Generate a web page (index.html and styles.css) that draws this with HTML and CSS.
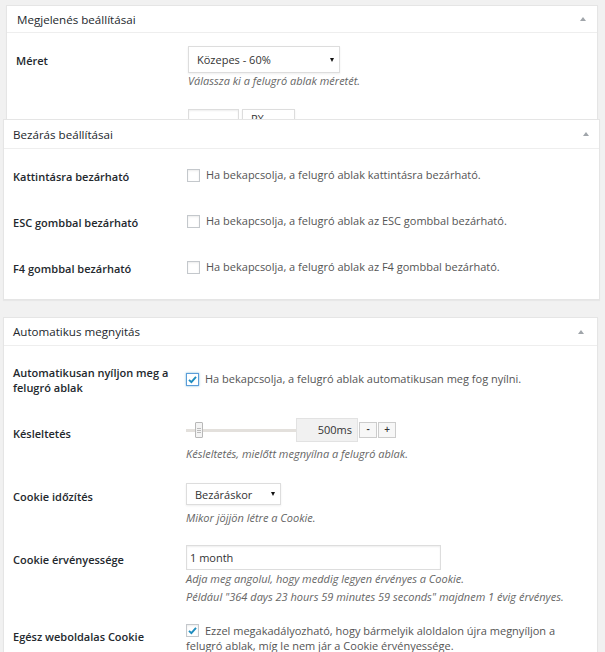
FILE: index.html
```html
<!DOCTYPE html>
<html lang="hu">
<head>
<meta charset="utf-8">
<title>Beállítások</title>
<link rel="stylesheet" href="styles.css">
</head>
<body>
<div class="page">
  <section class="card card-1">
    <header class="card-head head-1"><h2>Megjelenés beállításai</h2><span class="toggle"></span></header>
    <div class="card-body body-1">
      <div class="row r1-a">
        <div class="label lo7">Méret</div>
        <div class="field">
          <div class="select sel-meret"><span>Közepes - 60%</span><i class="arrow"></i></div>
          <p class="desc d1">Válassza ki a felugró ablak méretét.</p>
        </div>
      </div>
      <div class="row r1-b">
        <div class="label lo7">Egyedi szélesség</div>
        <div class="field inline">
          <div class="input in-small"></div>
          <div class="select sel-px"><span>PX</span><i class="arrow"></i></div>
        </div>
      </div>
    </div>
  </section>

  <section class="card card-2">
    <header class="card-head head-2"><h2>Bezárás beállításai</h2><span class="toggle"></span></header>
    <div class="card-body body-2">
      <div class="row">
        <div class="label lo2">Kattintásra bezárható</div>
        <div class="field"><p class="check-line"><span class="cb"></span>Ha bekapcsolja, a felugró ablak kattintásra bezárható.</p></div>
      </div>
      <div class="row">
        <div class="label lo2">ESC gombbal bezárható</div>
        <div class="field"><p class="check-line"><span class="cb"></span>Ha bekapcsolja, a felugró ablak az ESC gombbal bezárható.</p></div>
      </div>
      <div class="row">
        <div class="label lo2">F4 gombbal bezárható</div>
        <div class="field"><p class="check-line"><span class="cb"></span>Ha bekapcsolja, a felugró ablak az F4 gombbal bezárható.</p></div>
      </div>
    </div>
  </section>

  <section class="card card-3">
    <header class="card-head head-3"><h2>Automatikus megnyitás</h2><span class="toggle"></span></header>
    <div class="card-body body-3">
      <div class="row r3-a">
        <div class="label two-line">Automatikusan nyíljon meg a felugró ablak</div>
        <div class="field fo6"><p class="check-line"><span class="cb checked focus"><svg viewBox="0 0 13 13" width="13" height="13"><path d="M3 6.8 L5.4 9.2 L10 3.8" fill="none" stroke="#1e8cbe" stroke-width="1.9"/></svg></span>Ha bekapcsolja, a felugró ablak automatikusan meg fog nyílni.</p></div>
      </div>
      <div class="row r3-b">
        <div class="label lo8">Késleltetés</div>
        <div class="field">
          <div class="slider-line">
            <div class="slider"><span class="track"></span><span class="handle"><i></i><i></i><i></i></span></div>
            <div class="value">500ms</div>
            <div class="steps"><span class="step">-</span><span class="step">+</span></div>
          </div>
          <p class="desc d3">Késleltetés, mielőtt megnyílna a felugró ablak.</p>
        </div>
      </div>
      <div class="row r3-c">
        <div class="label lo6">Cookie időzítés</div>
        <div class="field">
          <div class="select sel-bez"><span>Bezáráskor</span><i class="arrow"></i></div>
          <p class="desc d4">Mikor jöjjön létre a Cookie.</p>
        </div>
      </div>
      <div class="row r3-d">
        <div class="label lo7">Cookie érvényessége</div>
        <div class="field">
          <div class="input in-wide">1 month</div>
          <p class="desc d1">Adja meg angolul, hogy meddig legyen érvényes a Cookie.<br>Például "364 days 23 hours 59 minutes 59 seconds" majdnem 1 évig érvényes.</p>
        </div>
      </div>
      <div class="row r3-e">
        <div class="label lo6">Egész weboldalas Cookie</div>
        <div class="field"><p class="check-line wrap"><span class="cb checked"><svg viewBox="0 0 13 13" width="13" height="13"><path d="M3 6.8 L5.4 9.2 L10 3.8" fill="none" stroke="#1e8cbe" stroke-width="1.9"/></svg></span>Ezzel megakadályozható, hogy bármelyik aloldalon újra megnyíljon a felugró ablak, míg le nem jár a Cookie érvényessége.</p></div>
      </div>
    </div>
  </section>
</div>
</body>
</html>
```

FILE: styles.css
```css
* { box-sizing: border-box; }
html, body { margin: 0; padding: 0; }
body {
  background: #f1f1f1;
  font-family: "Open Sans", "Noto Sans", sans-serif;
  font-size: 11px;
  color: #444;
  height: 652px;
  overflow: hidden;
}
.page { padding-top: 5px; }
p { margin: 0; }

.card {
  background: #fff;
  border: 1px solid #e5e5e5;
  box-shadow: 0 1px 1px rgba(0,0,0,0.04);
}
.card-1 { margin: 0 7px 0 6px; height: 114px; overflow: hidden; border-bottom: 0; }
.card-2 { margin: 0 5px 0 3px; position: relative; }
.card-3 { margin: 17px 7px 0 3px; }

.card-head {
  display: flex;
  align-items: center;
  justify-content: space-between;
  border-bottom: 1px solid #eee;
  padding: 0 11px 0 10px;
}
.head-1 { height: 27px; }
.head-2 { height: 29px; padding-left: 9px; padding-right: 10px; }
.head-3 { height: 28px; padding-left: 9px; padding-right: 13px; }
.card-head h2 {
  margin: 0;
  font-size: 11.6px;
  font-weight: 400;
  color: #23282d;
}
.toggle {
  width: 0; height: 0;
  border-left: 3.5px solid transparent;
  border-right: 3.5px solid transparent;
  border-bottom: 4px solid #a0a5aa;
}

.card-body { padding: 0 10px 0 9px; }
.row {
  display: grid;
  grid-template-columns: 173px 1fr;
  align-items: start;
}
.body-1 .row { grid-template-columns: 172px 1fr; }
.label {
  font-weight: 600;
  color: #23282d;
  line-height: 16px;
}
.label.two-line { line-height: 15px; padding-right: 6px; }
.lo2 { margin-top: 2px; }
.lo6 { margin-top: 6px; }
.lo7 { margin-top: 7px; }
.lo8 { margin-top: 8px; }
.fo6 { margin-top: 6px; }

/* card 1 */
.body-1 { padding-top: 13px; }
.r1-b { margin-top: 19px; }
.field.inline { display: flex; gap: 3px; }

/* card 2 */
.body-2 { padding-top: 18px; padding-bottom: 22px; display: flex; flex-direction: column; gap: 28px; }
.body-2 .row { grid-template-columns: 174px 1fr; }

/* card 3 */
.body-3 { padding-top: 19px; }
.r3-b { margin-top: 23px; }
.r3-c { margin-top: 20px; }
.r3-d { margin-top: 18px; }
.r3-e { margin-top: 17px; }

.desc {
  font-style: italic;
  color: #666;
  line-height: 18px;
}
.d1 { margin-top: 0; }
.d3 { margin-top: 3px; }
.d4 { margin-top: 4px; }
.sel-meret + .desc { margin-top: -1px; }

.check-line {
  line-height: 16px;
  color: #555;
  display: flex;
  align-items: center;
}
.check-line.wrap { display: block; line-height: 15px; padding-right: 14px; }
.check-line.wrap .cb { vertical-align: -2px; }
.cb {
  display: inline-block;
  flex: none;
  width: 13px; height: 13px;
  border: 1px solid #c4c8cc;
  background: #fff;
  box-shadow: inset 0 1px 2px rgba(0,0,0,0.08);
  margin-right: 6px;
  position: relative;
}
.cb svg { position: absolute; left: -1px; top: -1px; }
.cb.focus { border-color: #5b9dd9; box-shadow: 0 0 2px rgba(30,140,190,0.6); }

.select {
  position: relative;
  display: flex;
  align-items: center;
  background: #fff;
  border: 1px solid #ddd;
  box-shadow: 0 1px 2px rgba(0,0,0,0.07);
  color: #333;
}
.select .arrow {
  position: absolute;
  top: 50%;
  margin-top: -2px;
  width: 0; height: 0;
  border-left: 2.5px solid transparent;
  border-right: 2.5px solid transparent;
  border-top: 4px solid #111;
}
.sel-meret { width: 152px; height: 27px; padding-left: 8px; }
.sel-meret .arrow { right: 5px; }
.sel-px { width: 53px; height: 24px; padding-left: 8px; align-items: flex-start; padding-top: 1px; line-height: 15px; }
.sel-px .arrow { right: 5px; top: 11px; }
.sel-bez { width: 95px; height: 22px; padding-left: 8px; }
.sel-bez .arrow { right: 5px; }

.input {
  background: #fff;
  border: 1px solid #ddd;
  box-shadow: inset 0 1px 2px rgba(0,0,0,0.07);
  color: #333;
}
.in-small { width: 51px; height: 24px; }
.in-wide { width: 255px; height: 25px; line-height: 23px; padding-left: 3px; }

.slider-line { display: flex; align-items: center; height: 24px; }
.slider { position: relative; width: 110px; height: 24px; }
.slider .track {
  position: absolute;
  left: 0; right: 0; top: 11px;
  height: 3px;
  background: #e3e0dc;
}
.slider .handle {
  position: absolute;
  left: 9px; top: 4px;
  width: 8px; height: 16px;
  border: 1px solid #b8b8b8;
  border-radius: 1px;
  background: #f4f4f4;
  display: flex;
  flex-direction: column;
  justify-content: center;
  align-items: center;
  gap: 1px;
}
.slider .handle i { display: block; width: 4px; height: 1px; background: #bbb; }
.value {
  width: 62px; height: 24px;
  background: #f1f1f1;
  border: 1px solid #e2e2e2;
  text-align: right;
  padding-right: 5px;
  line-height: 22px;
  color: #333;
}
.steps { display: flex; gap: 1px; margin-left: 1px; }
.step {
  width: 18px; height: 16px;
  border: 1px solid #ccc;
  background: #f7f7f7;
  text-align: center;
  line-height: 13px;
  font-weight: 600;
  color: #333;
  font-size: 10px;
}
```
